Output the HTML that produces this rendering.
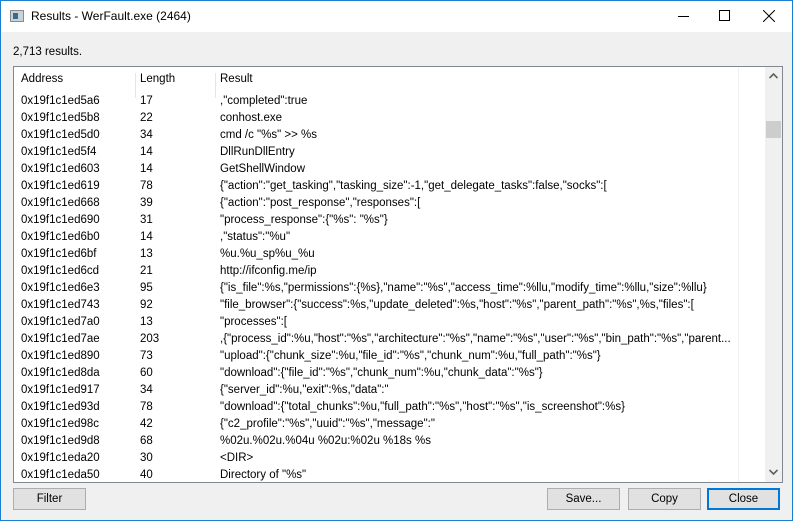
<!DOCTYPE html>
<html><head><style>
*{margin:0;padding:0;box-sizing:border-box}
body{width:793px;height:521px;overflow:hidden;font-family:"Liberation Sans",sans-serif;font-size:11.5px;color:#000;background:#f0f0f0;position:relative}
.win{position:absolute;left:0;top:0;width:793px;height:521px;border:1px solid #1a7fd0;background:#f0f0f0}
.title{position:absolute;left:0;top:0;width:791px;height:31px;background:#fff}
.title .t{position:absolute;left:30px;top:8px;font-size:12px}
.ico{position:absolute;left:9px;top:9px;width:14px;height:12px;border:1px solid #8a8a8a;background:#c8d4dc}
.ico:before{content:"";position:absolute;left:2px;top:2px;width:5px;height:6px;background:#3a6a8a}
.cnt{position:absolute;left:12px;top:45px}
.list{position:absolute;left:12px;top:65px;width:770px;height:417px;border:1px solid #828790;background:#fff;overflow:hidden}
.hdr{position:absolute;left:0;top:0;height:25px;width:750px}
.hdr div{position:absolute;top:6px}
.sep{position:absolute;top:0;width:1px;height:25px;background:#e5e5e5}
.row{position:absolute;left:0;height:17px;width:750px;white-space:nowrap}
.row span{position:absolute;top:2px}
.c1{left:7px}.c2{left:126px}.c3{left:206px}
.sb{position:absolute;right:0;top:0;width:17px;height:415px;background:#f0f0f0}
.thumb{position:absolute;left:1px;top:54px;width:15px;height:17px;background:#cdcdcd}
.btn{position:absolute;top:487px;height:22px;width:73px;border:1px solid #adadad;background:#e1e1e1;text-align:center;line-height:20px;font-size:11.5px}
</style></head><body><div class="win">
<div class="title"><div class="ico"></div><div class="t">Results - WerFault.exe (2464)</div>
<div style="position:absolute;left:677px;top:15px;width:11px;height:1px;background:#000"></div>
<div style="position:absolute;left:718px;top:9px;width:11px;height:11px;border:1px solid #000"></div>
<svg style="position:absolute;left:762px;top:9px" width="12" height="12"><path d="M0 0L12 12M12 0L0 12" stroke="#000" stroke-width="1"/></svg>
</div>
<div class="cnt">2,713 results.</div>
<div class="list">
<div style="position:absolute;left:724px;top:0;width:1px;height:415px;background:#f0f0f0"></div>
<div class="hdr"><div class="c1" style="left:7px">Address</div><div style="left:126px">Length</div><div style="left:206px">Result</div>
<div class="sep" style="left:121px"></div><div class="sep" style="left:201px"></div></div>
<div class="row" style="top:26px"><span class="c1">0x19f1c1ed5a6</span><span class="c2">17</span><span class="c3">,"completed":true</span></div>
<div class="row" style="top:43px"><span class="c1">0x19f1c1ed5b8</span><span class="c2">22</span><span class="c3">conhost.exe</span></div>
<div class="row" style="top:60px"><span class="c1">0x19f1c1ed5d0</span><span class="c2">34</span><span class="c3">cmd /c "%s" &gt;&gt; %s</span></div>
<div class="row" style="top:77px"><span class="c1">0x19f1c1ed5f4</span><span class="c2">14</span><span class="c3">DllRunDllEntry</span></div>
<div class="row" style="top:94px"><span class="c1">0x19f1c1ed603</span><span class="c2">14</span><span class="c3">GetShellWindow</span></div>
<div class="row" style="top:111px"><span class="c1">0x19f1c1ed619</span><span class="c2">78</span><span class="c3">{"action":"get_tasking","tasking_size":-1,"get_delegate_tasks":false,"socks":[</span></div>
<div class="row" style="top:128px"><span class="c1">0x19f1c1ed668</span><span class="c2">39</span><span class="c3">{"action":"post_response","responses":[</span></div>
<div class="row" style="top:145px"><span class="c1">0x19f1c1ed690</span><span class="c2">31</span><span class="c3">"process_response":{"%s": "%s"}</span></div>
<div class="row" style="top:162px"><span class="c1">0x19f1c1ed6b0</span><span class="c2">14</span><span class="c3">,"status":"%u"</span></div>
<div class="row" style="top:179px"><span class="c1">0x19f1c1ed6bf</span><span class="c2">13</span><span class="c3">%u.%u_sp%u_%u</span></div>
<div class="row" style="top:196px"><span class="c1">0x19f1c1ed6cd</span><span class="c2">21</span><span class="c3">http://ifconfig.me/ip</span></div>
<div class="row" style="top:213px"><span class="c1">0x19f1c1ed6e3</span><span class="c2">95</span><span class="c3">{"is_file":%s,"permissions":{%s},"name":"%s","access_time":%llu,"modify_time":%llu,"size":%llu}</span></div>
<div class="row" style="top:230px"><span class="c1">0x19f1c1ed743</span><span class="c2">92</span><span class="c3">"file_browser":{"success":%s,"update_deleted":%s,"host":"%s","parent_path":"%s",%s,"files":[</span></div>
<div class="row" style="top:247px"><span class="c1">0x19f1c1ed7a0</span><span class="c2">13</span><span class="c3">"processes":[</span></div>
<div class="row" style="top:264px"><span class="c1">0x19f1c1ed7ae</span><span class="c2">203</span><span class="c3">,{"process_id":%u,"host":"%s","architecture":"%s","name":"%s","user":"%s","bin_path":"%s","parent...</span></div>
<div class="row" style="top:281px"><span class="c1">0x19f1c1ed890</span><span class="c2">73</span><span class="c3">"upload":{"chunk_size":%u,"file_id":"%s","chunk_num":%u,"full_path":"%s"}</span></div>
<div class="row" style="top:298px"><span class="c1">0x19f1c1ed8da</span><span class="c2">60</span><span class="c3">"download":{"file_id":"%s","chunk_num":%u,"chunk_data":"%s"}</span></div>
<div class="row" style="top:315px"><span class="c1">0x19f1c1ed917</span><span class="c2">34</span><span class="c3">{"server_id":%u,"exit":%s,"data":"</span></div>
<div class="row" style="top:332px"><span class="c1">0x19f1c1ed93d</span><span class="c2">78</span><span class="c3">"download":{"total_chunks":%u,"full_path":"%s","host":"%s","is_screenshot":%s}</span></div>
<div class="row" style="top:349px"><span class="c1">0x19f1c1ed98c</span><span class="c2">42</span><span class="c3">{"c2_profile":"%s","uuid":"%s","message":"</span></div>
<div class="row" style="top:366px"><span class="c1">0x19f1c1ed9d8</span><span class="c2">68</span><span class="c3">%02u.%02u.%04u %02u:%02u %18s %s</span></div>
<div class="row" style="top:383px"><span class="c1">0x19f1c1eda20</span><span class="c2">30</span><span class="c3">&lt;DIR&gt;</span></div>
<div class="row" style="top:400px"><span class="c1">0x19f1c1eda50</span><span class="c2">40</span><span class="c3"> Directory of "%s"</span></div>
<div class="sb">
<svg style="position:absolute;left:4px;top:6px" width="9" height="6"><path d="M0.5 5L4.5 1L8.5 5" fill="none" stroke="#606060" stroke-width="1.6"/></svg>
<div class="thumb"></div>
<svg style="position:absolute;left:4px;top:402px" width="9" height="6"><path d="M0.5 1L4.5 5L8.5 1" fill="none" stroke="#606060" stroke-width="1.6"/></svg>
</div>
</div>
<div class="btn" style="left:12px">Filter</div>
<div class="btn" style="left:546px">Save...</div>
<div class="btn" style="left:627px">Copy</div>
<div class="btn" style="left:706px;border:2px solid #0078d7;line-height:18px">Close</div>
</div></body></html>
